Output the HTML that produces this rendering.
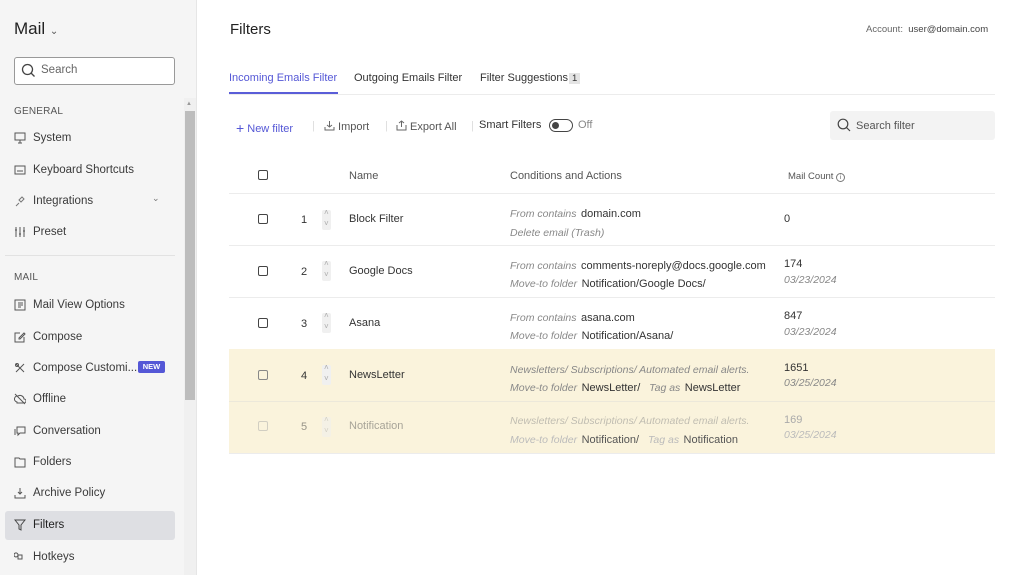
<!DOCTYPE html>
<html><head><meta charset="utf-8"><style>
*{margin:0;padding:0;box-sizing:border-box}
body{width:1024px;height:575px;overflow:hidden;background:#fff;font-family:"Liberation Sans",sans-serif;color:#333;position:relative}
.a{position:absolute;white-space:nowrap}
#sb{position:absolute;left:0;top:0;width:197px;height:575px;background:#f5f5f5;border-right:1px solid #e6e6e6}
.it{position:absolute;left:14px;width:160px;font-size:11.5px;color:#3a3a3a;height:16px;line-height:16px;white-space:nowrap}
.it svg{position:absolute;left:0;top:2px}
.it span{position:absolute;left:19px;white-space:nowrap}
.sec{position:absolute;left:14px;font-size:10px;color:#555;letter-spacing:.2px}
.cb{position:absolute;width:10px;height:10px;border:1.3px solid #444;border-radius:2px}
.hr{position:absolute;left:229px;width:766px;height:1px;background:#ececec}
.it2{font-style:italic;color:#888;font-size:10.5px}
.v{color:#333;font-size:11px}
.sp{position:absolute;width:9px;height:20px;background:#f0f0f0;border-radius:2px}
.sp:before{content:"˄";position:absolute;left:2px;top:-2px;font-size:8px;color:#aaa}
.sp:after{content:"˅";position:absolute;left:2px;top:9px;font-size:8px;color:#aaa}
</style></head><body>
<div id="sb">
<div class="a" style="left:14px;top:19px;font-size:17px;color:#222">Mail <span style="font-size:10px;color:#555">&#8964;</span></div>
<div class="a" style="left:14px;top:57px;width:161px;height:28px;border:1px solid #999;border-radius:3px;background:#fff"></div>
<svg class="a" style="left:21px;top:63px" width="15" height="15" viewBox="0 0 15 15"><circle cx="6.5" cy="6.5" r="5" fill="none" stroke="#444" stroke-width="1.3"/><path d="M10 10l3.5 3.5" stroke="#444" stroke-width="1.3"/></svg>
<div class="a" style="left:41px;top:64px;font-size:11.5px;color:#666">Search</div>
<div class="sec" style="top:106px">GENERAL</div>
<div class="it" style="top:130px"><svg width="12" height="12"><rect x="1" y="1" width="10" height="7" fill="none" stroke="#555"/><path d="M4 11h4M6 8v3" stroke="#555"/></svg><span>System</span></div>
<div class="it" style="top:162px"><svg width="12" height="12"><rect x="1" y="2" width="10" height="8" fill="none" stroke="#555"/><path d="M3 7h6" stroke="#555"/></svg><span>Keyboard Shortcuts</span></div>
<div class="it" style="top:193px"><svg width="12" height="12"><path d="M2 11l3-3M5 5l3-3 2 2-3 3z" fill="none" stroke="#777"/></svg><span>Integrations</span></div>
<div class="a" style="left:152px;top:193px;font-size:9px;color:#777">&#8964;</div>
<div class="it" style="top:224px"><svg width="12" height="12"><path d="M2 1v10M6 1v10M10 1v10M1 4h2M5 8h2M9 5h2" stroke="#555"/></svg><span>Preset</span></div>
<div class="a" style="left:5px;top:255px;width:170px;height:1px;background:#e2e2e2"></div>
<div class="sec" style="top:272px">MAIL</div>
<div class="it" style="top:297px"><svg width="12" height="12"><rect x="1" y="1" width="10" height="10" fill="none" stroke="#555"/><path d="M4 4h5M4 6h5M4 8h3" stroke="#555"/></svg><span>Mail View Options</span></div>
<div class="it" style="top:329px"><svg width="12" height="12"><path d="M10 6v5H1V2h5M5 7l5-5 1 1-5 5H5z" fill="none" stroke="#555"/></svg><span>Compose</span></div>
<div class="it" style="top:360px"><svg width="12" height="12"><path d="M2 2l8 8M10 2l-8 8" stroke="#555"/><circle cx="3" cy="3" r="1.5" fill="none" stroke="#555"/></svg><span>Compose Customi...</span></div>
<div class="a" style="left:138px;top:361px;width:27px;height:12px;background:#5457d6;border-radius:2px;color:#fff;font-size:7.5px;font-weight:bold;text-align:center;line-height:12px">NEW</div>
<div class="it" style="top:391px"><svg width="12" height="12"><path d="M3 9a3 3 0 0 1 1-6 4 4 0 0 1 6 3 2 2 0 0 1 0 4H3zM1 1l10 10" fill="none" stroke="#555"/></svg><span>Offline</span></div>
<div class="it" style="top:423px"><svg width="12" height="12"><path d="M3 2h8v6H6l-2 2V8H3zM1 4v6" fill="none" stroke="#555"/></svg><span>Conversation</span></div>
<div class="it" style="top:454px"><svg width="12" height="12"><path d="M1 2h4l1 1h5v8H1z" fill="none" stroke="#555"/></svg><span>Folders</span></div>
<div class="it" style="top:485px"><svg width="12" height="12"><path d="M1 8v3h10V8M6 1v6M4 5l2 2 2-2" fill="none" stroke="#555"/></svg><span>Archive Policy</span></div>
<div class="a" style="left:5px;top:511px;width:170px;height:29px;background:#dedfe3;border-radius:3px"></div>
<div class="it" style="top:517px"><svg width="12" height="12"><path d="M1 1h10L7 6v5L5 10V6z" fill="none" stroke="#444"/></svg><span style="color:#222">Filters</span></div>
<div class="it" style="top:549px"><svg width="12" height="12"><path d="M4 4h4v4H4zM4 4a2 2 0 1 1 0-0.1M8 4a2 2 0 1 1 0 0M4 8a2 2 0 1 1 0 0M8 8a2 2 0 1 1 0 0" fill="none" stroke="#555"/></svg><span>Hotkeys</span></div>
<div class="a" style="left:184px;top:98px;width:12px;height:477px;background:#f0f0f0"></div>
<div class="a" style="left:186px;top:101px;font-size:6px;color:#999">▲</div>
<div class="a" style="left:185px;top:111px;width:10px;height:289px;background:#bdbdbd"></div>
</div>

<div class="a" style="left:230px;top:21px;font-size:15px;color:#222">Filters</div>
<div class="a" style="left:866px;top:24px;font-size:9.5px;color:#666">Account:&nbsp; <span style="color:#444">user@domain.com</span></div>

<div class="a" style="left:229px;top:72px;font-size:11px;color:#5457d6">Incoming Emails Filter</div>
<div class="a" style="left:229px;top:92px;width:109px;height:2px;background:#5a5dd8"></div>
<div class="a" style="left:354px;top:72px;font-size:11px;color:#333">Outgoing Emails Filter</div>
<div class="a" style="left:480px;top:72px;font-size:11px;color:#333">Filter Suggestions<span style="background:#e4e4e4;font-size:9.5px;padding:0 3px;margin-left:1px">1</span></div>
<div class="hr" style="top:94px"></div>

<div class="a" style="left:236px;top:119px;font-size:11px;color:#5457d6"><span style="font-size:14px;position:relative;top:1px">+</span> New filter</div>
<div class="a" style="left:312px;top:120px;color:#ddd;font-size:11px">|</div>
<div class="a" style="left:324px;top:120px;font-size:11px;color:#555"><svg width="11" height="11" style="vertical-align:-1px"><path d="M1 7v3h9V7M5.5 1v6M3 5l2.5 2 2.5-2" fill="none" stroke="#666"/></svg> Import</div>
<div class="a" style="left:385px;top:120px;color:#ddd;font-size:11px">|</div>
<div class="a" style="left:396px;top:120px;font-size:11px;color:#555"><svg width="11" height="11" style="vertical-align:-1px"><path d="M1 5v5h9V5M5.5 7V1M3 3l2.5-2 2.5 2" fill="none" stroke="#666"/></svg> Export All</div>
<div class="a" style="left:471px;top:120px;color:#ddd;font-size:11px">|</div>
<div class="a" style="left:479px;top:119px;font-size:11px;color:#333">Smart Filters</div>
<div class="a" style="left:549px;top:119px;width:24px;height:13px;border:1.2px solid #444;border-radius:7px"></div>
<div class="a" style="left:552px;top:122px;width:7px;height:7px;border-radius:50%;background:#444"></div>
<div class="a" style="left:578px;top:119px;font-size:11px;color:#888">Off</div>

<div class="a" style="left:830px;top:111px;width:165px;height:29px;background:#f3f3f3;border-radius:3px"></div>
<svg class="a" style="left:837px;top:118px" width="14" height="14"><circle cx="6" cy="6" r="4.8" fill="none" stroke="#444" stroke-width="1.2"/><path d="M9.5 9.5l3.5 3.5" stroke="#444" stroke-width="1.2"/></svg>
<div class="a" style="left:856px;top:120px;font-size:11px;color:#555">Search filter</div>

<div class="cb" style="left:258px;top:170px"></div>
<div class="a" style="left:349px;top:170px;font-size:11px;color:#555">Name</div>
<div class="a" style="left:510px;top:170px;font-size:11px;color:#555">Conditions and Actions</div>
<div class="a" style="left:788px;top:171px;font-size:9.5px;color:#555">Mail Count <span style="display:inline-block;width:9px;height:9px;border:1px solid #777;border-radius:50%;font-size:6px;text-align:center;line-height:8px;vertical-align:0">i</span></div>
<div class="hr" style="top:193px"></div>

<div class="cb" style="left:258px;top:214px"></div>
<div class="a" style="left:301px;top:214px;font-size:11px">1</div>
<div class="sp" style="left:322px;top:210px"></div>
<div class="a" style="left:349px;top:213px;font-size:11px">Block Filter</div>
<div class="a" style="left:510px;top:204px"><span class="it2">From contains</span> <span class="v">domain.com</span></div>
<div class="a" style="left:510px;top:223px"><span class="it2">Delete email (Trash)</span></div>
<div class="a" style="left:784px;top:213px;font-size:11px">0</div>
<div class="hr" style="top:245px"></div>

<div class="cb" style="left:258px;top:266px"></div>
<div class="a" style="left:301px;top:266px;font-size:11px">2</div>
<div class="sp" style="left:322px;top:261px"></div>
<div class="a" style="left:349px;top:265px;font-size:11px">Google Docs</div>
<div class="a" style="left:510px;top:256px"><span class="it2">From contains</span> <span class="v">comments-noreply@docs.google.com</span></div>
<div class="a" style="left:510px;top:274px"><span class="it2">Move-to folder</span> <span class="v">Notification/Google Docs/</span></div>
<div class="a" style="left:784px;top:258px;font-size:11px">174</div>
<div class="a it2" style="left:784px;top:274px">03/23/2024</div>
<div class="hr" style="top:297px"></div>

<div class="cb" style="left:258px;top:318px"></div>
<div class="a" style="left:301px;top:318px;font-size:11px">3</div>
<div class="sp" style="left:322px;top:313px"></div>
<div class="a" style="left:349px;top:317px;font-size:11px">Asana</div>
<div class="a" style="left:510px;top:308px"><span class="it2">From contains</span> <span class="v">asana.com</span></div>
<div class="a" style="left:510px;top:326px"><span class="it2">Move-to folder</span> <span class="v">Notification/Asana/</span></div>
<div class="a" style="left:784px;top:310px;font-size:11px">847</div>
<div class="a it2" style="left:784px;top:326px">03/23/2024</div>

<div class="a" style="left:229px;top:349px;width:766px;height:104px;background:#faf3dc"></div>
<div class="hr" style="top:401px;background:#ece8da"></div>
<div class="cb" style="left:258px;top:370px;border-color:#888"></div>
<div class="a" style="left:301px;top:370px;font-size:11px">4</div>
<div class="sp" style="left:322px;top:365px"></div>
<div class="a" style="left:349px;top:369px;font-size:11px">NewsLetter</div>
<div class="a" style="left:510px;top:360px"><span class="it2">Newsletters/ Subscriptions/ Automated email alerts.</span></div>
<div class="a" style="left:510px;top:378px"><span class="it2">Move-to folder</span> <span class="v">NewsLetter/</span> &nbsp;<span class="it2">Tag as</span> <span class="v">NewsLetter</span></div>
<div class="a" style="left:784px;top:362px;font-size:11px">1651</div>
<div class="a it2" style="left:784px;top:377px">03/25/2024</div>

<div style="opacity:.5">
<div class="cb" style="left:258px;top:421px;border-color:#aaa"></div>
<div class="a" style="left:301px;top:421px;font-size:11px">5</div>
<div class="sp" style="left:322px;top:417px"></div>
<div class="a" style="left:349px;top:420px;font-size:11px;color:#555">Notification</div>
<div class="a" style="left:510px;top:411px"><span class="it2">Newsletters/ Subscriptions/ Automated email alerts.</span></div>
</div>
<div class="a" style="left:510px;top:430px"><span class="it2" style="color:#bbb">Move-to folder</span> <span class="v" style="color:#555">Notification/</span> &nbsp;<span class="it2" style="color:#bbb">Tag as</span> <span class="v" style="color:#555">Notification</span></div>
<div class="a" style="left:784px;top:414px;font-size:11px;color:#aaa">169</div>
<div class="a it2" style="left:784px;top:429px;color:#bbb">03/25/2024</div>
<div class="hr" style="top:453px"></div>
</body></html>
